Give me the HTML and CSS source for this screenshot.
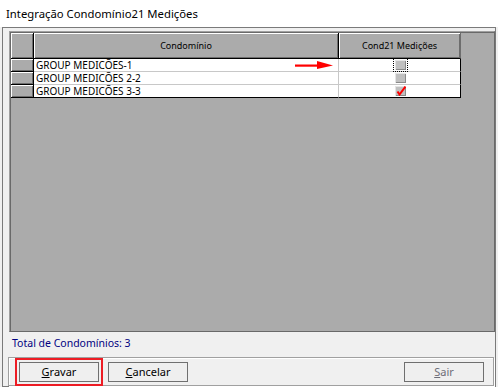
FILE: index.html
```html
<!DOCTYPE html>
<html>
<head>
<meta charset="utf-8">
<link rel="stylesheet" href="styles.css">
</head>
<body>
<div class="titlebar">Integração Condomínio21 Medições</div>
<div class="frame">
  <div class="workspace">
    <div class="grid">
      <div class="hcell ind"></div>
      <div class="hcell">Condomínio</div>
      <div class="hcell last">Cond21 Medições</div>

      <div class="ind"></div>
      <div class="cell name">GROUP MEDICÕES-1
        <svg class="arrow" width="40" height="10" viewBox="0 0 40 10"><rect x="0" y="3.5" width="24" height="2.2" fill="#ff0000"/><polygon points="22,0 38,4.6 22,8" fill="#ff0000"/></svg>
      </div>
      <div class="cell chk"><span class="focus"><span class="box"></span></span></div>

      <div class="ind"></div>
      <div class="cell name">GROUP MEDICÕES 2-2</div>
      <div class="cell chk"><span class="box"></span></div>

      <div class="ind lastrow"></div>
      <div class="cell name lastrow">GROUP MEDICÕES 3-3</div>
      <div class="cell chk lastrow"><span class="box checked"><svg width="10" height="10" viewBox="0 0 10 10"><path d="M1.5 5.5 L3.5 8.5 L9.5 0.5" stroke="#ff0000" stroke-width="2" fill="none"/></svg></span></div>
    </div>
  </div>
  <div class="total">Total de Condomínios: 3</div>
  <div class="panel">
    <button class="btn gravar"><u>G</u>ravar<span class="mark"></span></button>
    <button class="btn"><u>C</u>ancelar</button>
    <span class="spacer"></span>
    <button class="btn disabled"><u>S</u>air</button>
  </div>
</div>
</body>
</html>
```
FILE: styles.css
```css
* { box-sizing: border-box; }
html, body { margin: 0; padding: 0; }
body {
  width: 498px;
  height: 387px;
  background: #f0f0f0;
  font-family: "Noto Sans", "Open Sans", sans-serif;
  overflow: hidden;
}
.titlebar {
  height: 27px;
  background: #fff;
  font-size: 11.3px;
  line-height: 27px;
  padding-left: 6px;
  color: #000;
}
.frame {
  margin: 0 2px 0 2px;
  height: 360px;
  border: 1px solid #7a7a7a;
  background: #f0f0f0;
  display: flex;
  flex-direction: column;
}
.workspace {
  margin: 3px 0 0 6px;
  height: 304px;
  background: #ababab;
  border-top: 1px solid #a0a0a0;
  border-left: 1px solid #a0a0a0;
  box-shadow: inset 1px 1px 0 #696969;
  border-right: 1px solid #696969;
  border-bottom: 1px solid #696969;
  padding: 1px 0 0 1px;
}
.grid {
  display: grid;
  grid-template-columns: 23px 305px 122px;
  grid-template-rows: 26px 13px 13px 13px;
  width: 450px;
}
.hcell {
  background: #ababab;
  box-shadow: inset 1px 1px 0 #fff, inset -1px -1px 0 #6d6d6d;
  border-right: 1px solid #000;
  border-bottom: 1px solid #000;
  font-size: 9px;
  color: #000;
  display: flex;
  align-items: center;
  justify-content: center;
  padding-bottom: 1px;
}
.hcell.last { border-right: 1px solid #6d6d6d; }
.ind {
  background: #ababab;
  box-shadow: inset 1px 1px 0 #fff, inset -1px -1px 0 #6d6d6d;
  border-right: 1px solid #000;
  border-bottom: 1px solid #000;
}
.cell {
  background: #fff;
  border-right: 1px solid #c8c8c8;
  border-bottom: 1px solid #c8c8c8;
  font-size: 10px;
  line-height: 12px;
  color: #000;
}
.cell.lastrow { border-bottom: 1px solid #000; }
.cell.chk { border-right: 1px solid #000; display: flex; justify-content: center; align-items: center; padding-left: 2px; }
.name { position: relative; padding-left: 2px; white-space: nowrap; }
.arrow { position: absolute; left: 261px; top: 2px; }
.box {
  display: block;
  width: 11px;
  height: 10px;
  background: #c0c0c0;
  box-shadow: inset 1px 1px 0 #e4e4e4, inset -1px -1px 0 #8a8a8a;
  position: relative;
}
.box svg { position: absolute; left: 1px; top: 0; }
.focus {
  display: block;
  padding: 1px;
  border: 1px dotted #000;
}
.total {
  height: 22px;
  line-height: 22px;
  padding-left: 9px;
  font-size: 10.5px;
  color: #000080;
}
.panel {
  margin: 3px 1px 0 5px;
  height: 29px;
  border: 1px solid #a0a0a0;
  box-shadow: inset 1px 1px 0 #fff, 1px 1px 0 #fff;
  display: flex;
  align-items: flex-start;
  padding: 4px 9px 0 10px;
  gap: 9px;
}
.spacer { flex: 1; }
.btn {
  width: 80px;
  height: 20px;
  border: 1px solid #707070;
  background: #efefef;
  font-family: "Noto Sans", "Open Sans", sans-serif;
  font-size: 11px;
  line-height: 16px;
  color: #000;
  padding: 0;
  position: relative;
}
.btn.disabled { color: #6d6d78; border-color: #6f6f6f; }
.mark {
  position: absolute;
  left: -5px;
  top: -5px;
  right: -5px;
  bottom: -5px;
  border: 2px solid #ed1c24;
}
```
